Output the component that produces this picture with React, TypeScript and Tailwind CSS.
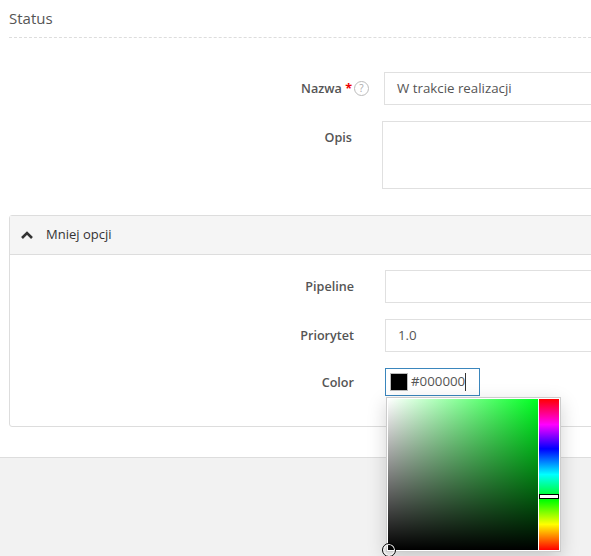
import React from "react";

const Label: React.FC<{ children: React.ReactNode; width: string }> = ({ children, width }) => (
  <div className={`${width} shrink-0 text-right text-[12.6px] font-semibold text-[#555] leading-[18px] pt-[8px]`}>
    {children}
  </div>
);

const ColorPicker: React.FC = () => (
  <div className="absolute left-0 top-[28px] z-10 flex gap-px p-px bg-white border border-[#ccc] shadow-[0_6px_18px_rgba(0,0,0,0.18)]">
    <div
      className="relative w-[150px] h-[151px]"
      style={{
        background:
          "linear-gradient(to top, #000, rgba(0,0,0,0)), linear-gradient(to right, #fff, #00ff22)",
      }}
    >
      <div className="absolute left-px top-full w-[14px] h-[14px] -translate-x-1/2 -translate-y-1/2 rounded-full border border-black shadow-[inset_0_0_0_1px_#fff]" />
    </div>
    <div
      className="relative w-[20px] h-[151px]"
      style={{
        background:
          "linear-gradient(to bottom, #f00 0%, #f0f 17%, #00f 33%, #0ff 50%, #0f0 67%, #ff0 83%, #f00 100%)",
      }}
    >
      <div className="absolute left-0 right-0 top-[95px] h-[5px] bg-white border border-black" />
    </div>
  </div>
);

export default function App() {
  return (
    <div className="w-[591px] h-[556px] overflow-hidden bg-white font-['Open_Sans',sans-serif] flex flex-col">
      <div className="w-[680px] shrink-0">
        {/* Nagłówek */}
        <div className="px-[9px] pt-[8px]">
          <h3 className="text-[15px] leading-[20px] text-[#555] pb-[9px] border-b border-dashed border-[#ddd]">
            Status
          </h3>
        </div>

        {/* Nazwa */}
        <div className="flex mt-[34px]">
          <div className="relative w-[352px] shrink-0 text-right text-[12.6px] font-semibold text-[#555] leading-[18px] pt-[8px]">
            Nazwa <span className="text-[#e00] font-bold">*</span>
            <span className="absolute left-full ml-[2px] top-[9px] w-[15px] h-[15px] rounded-full border border-[#bbb] text-[#aaa] text-[10px] font-normal leading-[13px] text-center">
              ?
            </span>
          </div>
          <div className="ml-[32px] flex-1 h-[33px] border border-[#e0e0e0] px-3 text-[13.3px] leading-[31px] text-[#555]">
            W trakcie realizacji
          </div>
        </div>

        {/* Opis */}
        <div className="flex mt-[16px]">
          <Label width="w-[352px]">Opis</Label>
          <div className="ml-[30px] flex-1 h-[68px] border border-[#e0e0e0]" />
        </div>

        {/* Mniej opcji */}
        <div className="ml-[9px] mt-[26px] border border-[#ddd] rounded-[3px]">
          <div className="h-[39px] bg-[#f5f5f5] border-b border-[#ddd] flex items-center pl-[10px] text-[13px] text-[#333]">
            <svg width="14" height="10" viewBox="0 0 14 10" className="mr-[12px]">
              <path d="M2 8 L7 3 L12 8" fill="none" stroke="#333" strokeWidth="2.6" />
            </svg>
            Mniej opcji
          </div>
          <div className="pt-[15px] pb-[30px] flex flex-col gap-[16px]">
            <div className="flex">
              <Label width="w-[344px]">Pipeline</Label>
              <div className="ml-[31px] flex-1 h-[33px] border border-[#e0e0e0]" />
            </div>
            <div className="flex">
              <Label width="w-[344px]">Priorytet</Label>
              <div className="ml-[31px] flex-1 h-[33px] border border-[#e0e0e0] px-3 text-[13.3px] leading-[31px] text-[#555]">
                1.0
              </div>
            </div>
            <div className="flex">
              <div className="w-[344px] shrink-0 text-right text-[12.6px] font-semibold text-[#555] leading-[18px] pt-[6px]">
                Color
              </div>
              <div className="relative ml-[31px] w-[95px] h-[28px] border border-[#3a86bd] flex items-center pl-[4px] text-[13.3px] text-[#555]">
                <span className="w-[18px] h-[18px] bg-black border border-[#bbb] mr-[3px]" />
                #000000
                <span className="w-px h-[18px] bg-[#333]" />
                <ColorPicker />
              </div>
            </div>
          </div>
        </div>
      </div>

      {/* Stopka */}
      <div className="mt-[30px] flex-1 bg-[#f2f2f2] border-t border-[#ddd]" />
    </div>
  );
}
